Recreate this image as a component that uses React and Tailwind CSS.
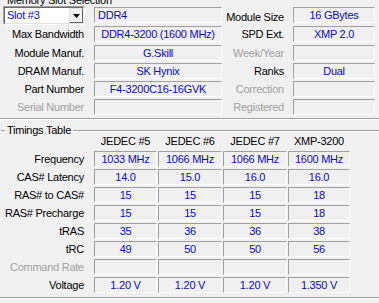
import React from "react";

const TOP_ROWS = [
  { label: "Max Bandwidth", value: "DDR4-3200 (1600 MHz)", rLabel: "SPD Ext.", rValue: "XMP 2.0", h: "h-[19px]" },
  { label: "Module Manuf.", value: "G.Skill", rLabel: "Week/Year", rValue: "", rOff: true, h: "h-[18px]" },
  { label: "DRAM Manuf.", value: "SK Hynix", rLabel: "Ranks", rValue: "Dual", h: "h-[18px]" },
  { label: "Part Number", value: "F4-3200C16-16GVK", rLabel: "Correction", rValue: "", rOff: true, h: "h-[18px]" },
  { label: "Serial Number", value: "", off: true, rLabel: "Registered", rValue: "", rOff: true, h: "h-[18px]" },
];

const COLS = ["JEDEC #5", "JEDEC #6", "JEDEC #7", "XMP-3200"];
const COL_W = ["w-[63px]", "w-[64px]", "w-[64px]", "w-[62px]"];

const TIMINGS = [
  { label: "Frequency", vals: ["1033 MHz", "1066 MHz", "1066 MHz", "1600 MHz"] },
  { label: "CAS# Latency", vals: ["14.0", "15.0", "16.0", "16.0"] },
  { label: "RAS# to CAS#", vals: ["15", "15", "15", "18"] },
  { label: "RAS# Precharge", vals: ["15", "15", "15", "18"] },
  { label: "tRAS", vals: ["35", "36", "36", "38"] },
  { label: "tRC", vals: ["49", "50", "50", "56"] },
  { label: "Command Rate", vals: ["", "", "", ""], off: true },
  { label: "Voltage", vals: ["1.20 V", "1.20 V", "1.20 V", "1.350 V"] },
];

function Field({ w, children, left }) {
  return (
    <div
      className={`${w} h-[16px] shrink-0 flex items-center border border-t-[#a0a0a0] border-l-[#a0a0a0] border-b-white border-r-white text-[#0a0ac8] whitespace-nowrap ${left ? "justify-start pl-[3px]" : "justify-center"}`}
    >
      {children}
    </div>
  );
}

function Label({ w, off, children }) {
  return (
    <div className={`${w} shrink-0 text-right whitespace-nowrap ${off ? "text-[#a0a0a0]" : "text-black"}`}>{children}</div>
  );
}

function Etched() {
  return <div className="h-[2px] border-t border-t-[#a0a0a0] border-b border-b-white" />;
}

export default function App() {
  return (
    <div
      className="w-[379px] h-[303px] overflow-hidden bg-[#f0f0f0] text-[11px] leading-[13px] tracking-[-0.25px] text-black"
      style={{ fontFamily: '"Liberation Sans", Arial, sans-serif' }}
    >
      {/* group title is clipped by the window top */}
      <div className="h-[12px]">
        <div className="-mt-[6px] pl-[7px] whitespace-nowrap">Memory Slot Selection</div>
      </div>

      <div className="flex h-[20px] items-start">
        <div className="ml-[3px] w-[82px] h-[19px] shrink-0 border border-t-[#a0a0a0] border-l-[#a0a0a0] border-b-white border-r-white">
          <div className="h-full flex items-center bg-white border border-t-[#696969] border-l-[#696969] border-b-[#e3e3e3] border-r-[#e3e3e3]">
            <span className="flex-1 pl-[2px] text-[#0a0ac8]">Slot #3</span>
            <div className="w-[14px] h-[15px] flex items-center justify-center bg-[#f0f0f0] border border-t-[#e3e3e3] border-l-[#e3e3e3] border-b-[#696969] border-r-[#696969]">
              <svg width="7" height="4" viewBox="0 0 7 4">
                <path d="M0 0h7L3.5 4z" fill="#000" />
              </svg>
            </div>
          </div>
        </div>
        <div className="ml-[9px] mt-[1px]">
          <Field w="w-[128px]" left>DDR4</Field>
        </div>
        <div className="mt-[5px]">
          <Label w="w-[62px]">Module Size</Label>
        </div>
        <div className="ml-[9px] mt-[1px]">
          <Field w="w-[82px]">16 GBytes</Field>
        </div>
      </div>

      {TOP_ROWS.map((r) => (
        <div key={r.label} className={`flex items-start ${r.h}`}>
          <div className="mt-[2px]">
            <Label w="w-[84px]" off={r.off}>{r.label}</Label>
          </div>
          <div className="ml-[10px]">
            <Field w="w-[128px]">{r.value}</Field>
          </div>
          <div className="mt-[2px]">
            <Label w="w-[62px]" off={r.rOff}>{r.rLabel}</Label>
          </div>
          <div className="ml-[9px]">
            <Field w="w-[82px]">{r.rValue}</Field>
          </div>
        </div>
      ))}

      <div className="mt-[1px]">
        <Etched />
      </div>

      {/* Timings Table */}
      <div className="mt-[4px] flex items-center h-[13px]">
        <div className="w-[4px] ml-[1px]">
          <Etched />
        </div>
        <span className="px-[2px] whitespace-nowrap">Timings Table</span>
        <div className="flex-1">
          <Etched />
        </div>
      </div>

      <div className="flex h-[11px] items-center ml-[94px] gap-[1px] mt-[-1px]">
        {COLS.map((c, i) => (
          <div key={c} className={`${COL_W[i]} text-center whitespace-nowrap`}>{c}</div>
        ))}
      </div>

      <div className="mt-[4px] flex flex-col gap-[2px]">
        {TIMINGS.map((t) => (
          <div key={t.label} className="flex items-center h-[16px]">
            <Label w="w-[84px]" off={t.off}>{t.label}</Label>
            <div className="ml-[10px] flex gap-[1px]">
              {t.vals.map((v, i) => (
                <Field key={i} w={COL_W[i]}>{v}</Field>
              ))}
            </div>
          </div>
        ))}
      </div>

      <div className="mt-[4px]">
        <Etched />
      </div>
    </div>
  );
}
